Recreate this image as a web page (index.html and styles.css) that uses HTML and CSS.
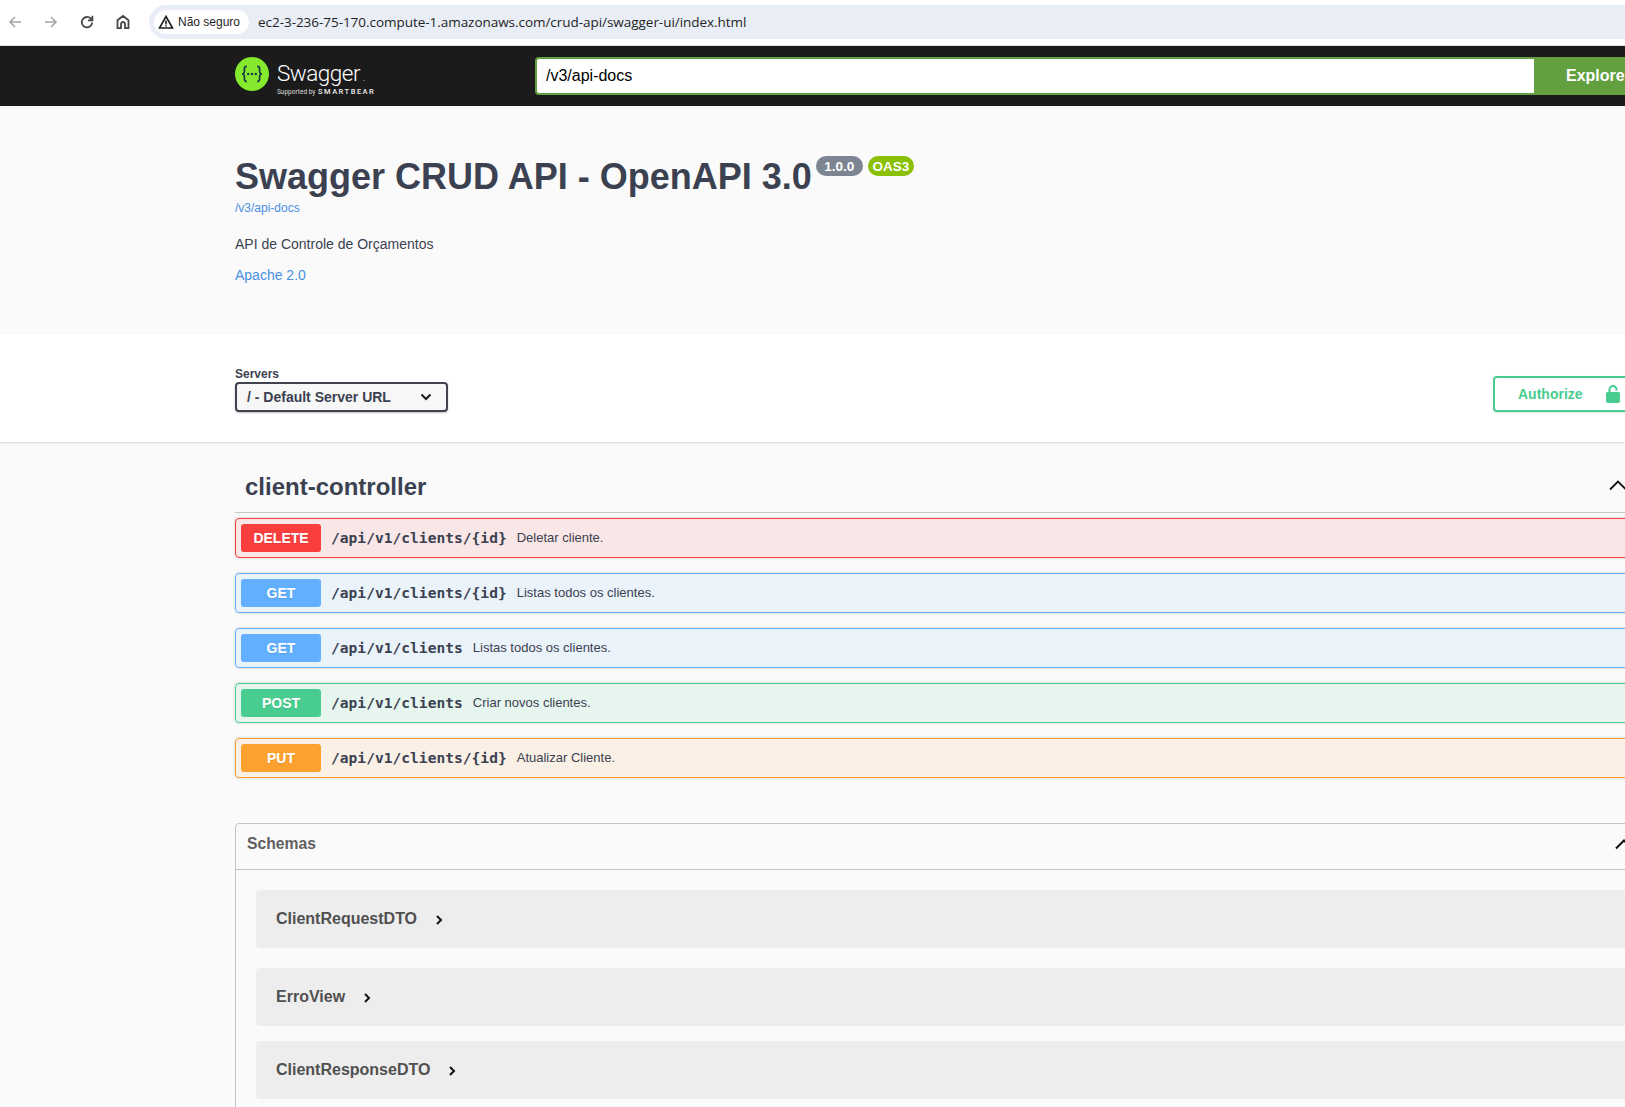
FILE: index.html
```html
<!DOCTYPE html>
<html lang="pt-BR">
<head>
<meta charset="utf-8">
<title>Swagger UI</title>
<link rel="stylesheet" href="styles.css">
</head>
<body>
<header class="browser">
  <div class="nav-icons">
    <svg class="nav-icon dim" viewBox="0 0 16 16"><path d="M14 8H3M8 3 3 8l5 5"/></svg>
    <svg class="nav-icon dim" viewBox="0 0 16 16"><path d="M2 8h11M8 3l5 5-5 5"/></svg>
    <svg class="nav-icon strong" viewBox="0 0 16 16"><path d="M13.200 8.500a5.200 5.200 0 1 1-1.500-4L13.400 6.300M13.400 1.800v4.500H9"/></svg>
    <svg class="nav-icon strong" viewBox="0 0 16 16"><path d="M2.500 14.200V6.300L8 2l5.500 4.300v7.900H10V10a2 2 0 0 0-4 0v4.200z"/></svg>
  </div>
  <div class="omnibox">
    <div class="security">
      <svg class="warn" viewBox="0 0 16 16"><path d="M8 2.500 1.500 14h13zM8 6.500v4M8 11.300v1.200"/></svg>
      <span>Não seguro</span>
    </div>
    <span class="url">ec2-3-236-75-170.compute-1.amazonaws.com/crud-api/swagger-ui/index.html</span>
  </div>
</header>

<div class="topbar">
  <div class="wrapper topbar-row">
    <div class="logo">
      <svg class="logo-mark" viewBox="0 0 36 36">
        <circle cx="18" cy="18" r="18" fill="#85ea2d"/>
        <path class="brace" d="M12.500 10c-3 0-2.500 2-2.500 4.500 0 2-.5 3.500-2.500 3.500 2 0 2.500 1.500 2.500 3.500s-.5 4.500 2.500 4.500M23.500 10c3 0 2.500 2 2.500 4.500 0 2 .5 3.500 2.500 3.500-2 0-2.500 1.500-2.500 3.500s.5 4.500-2.500 4.500"/>
        <circle class="dot" cx="14" cy="18" r="1.300"/><circle class="dot" cx="18" cy="18" r="1.300"/><circle class="dot" cx="22" cy="18" r="1.300"/>
      </svg>
      <div class="logo-text">
        <span class="logo-name">Swagger<span class="logo-tm">.</span></span>
        <span class="logo-sub">Supported by <b>SMARTBEAR</b></span>
      </div>
    </div>
    <form class="explore">
      <input class="explore-input" type="text" value="/v3/api-docs">
      <button class="explore-btn" type="button">Explore</button>
    </form>
  </div>
</div>

<section class="info">
  <div class="wrapper">
    <div class="title-row">
      <h1 class="title">Swagger CRUD API - OpenAPI 3.0</h1>
      <span class="pill pill-version">1.0.0</span>
      <span class="pill pill-oas">OAS3</span>
    </div>
    <a class="docs-link">/v3/api-docs</a>
    <p class="desc">API de Controle de Orçamentos</p>
    <a class="license">Apache 2.0</a>
  </div>
</section>

<section class="servers">
  <div class="wrapper servers-row">
    <div class="server-pick">
      <span class="servers-label">Servers</span>
      <div class="select">
        <span>/ - Default Server URL</span>
        <svg class="select-chev" viewBox="0 0 12 8"><path d="M1.500 1.500 6 6l4.500-4.500"/></svg>
      </div>
    </div>
    <button class="authorize" type="button">
      <span>Authorize</span>
      <svg class="lock" viewBox="0 0 14 18"><path class="lock-body" d="M0 8.500A1.500 1.500 0 0 1 1.500 7h11A1.500 1.500 0 0 1 14 8.500V16a2 2 0 0 1-2 2H2a2 2 0 0 1-2-2z"/><path class="lock-arc" d="M3.500 8V4.500a3.500 3.500 0 0 1 7 0v1.300"/></svg>
    </button>
  </div>
</section>

<main class="wrapper">
  <div class="tag">
    <h3 class="tag-name">client-controller</h3>
    <svg class="tag-chev" viewBox="0 0 20 12"><path d="M1 10.500 9 2.500l8 8"/></svg>
  </div>
  <div class="op op-delete"><span class="method">DELETE</span><span class="path">/api/v1/clients/{id}</span><span class="summary">Deletar cliente.</span></div>
  <div class="op op-get"><span class="method">GET</span><span class="path">/api/v1/clients/{id}</span><span class="summary">Listas todos os clientes.</span></div>
  <div class="op op-get"><span class="method">GET</span><span class="path">/api/v1/clients</span><span class="summary">Listas todos os clientes.</span></div>
  <div class="op op-post"><span class="method">POST</span><span class="path">/api/v1/clients</span><span class="summary">Criar novos clientes.</span></div>
  <div class="op op-put"><span class="method">PUT</span><span class="path">/api/v1/clients/{id}</span><span class="summary">Atualizar Cliente.</span></div>

  <section class="schemas">
    <div class="schemas-head">
      <h4 class="schemas-title">Schemas</h4>
      <svg class="schemas-chev" viewBox="0 0 20 12"><path d="M1 10.500 9 2.500l8 8"/></svg>
    </div>
    <div class="schemas-body">
      <div class="model model-first"><span>ClientRequestDTO</span><svg class="model-chev" viewBox="0 0 8 12"><path d="M2 2l4 4-4 4"/></svg></div>
      <div class="model model-second"><span>ErroView</span><svg class="model-chev" viewBox="0 0 8 12"><path d="M2 2l4 4-4 4"/></svg></div>
      <div class="model"><span>ClientResponseDTO</span><svg class="model-chev" viewBox="0 0 8 12"><path d="M2 2l4 4-4 4"/></svg></div>
    </div>
  </section>
</main>
</body>
</html>
```

FILE: styles.css
```css
* { box-sizing: border-box; }
html, body { height: 100%; }
body {
  margin: 0;
  height: 1107px;
  overflow: hidden;
  background: #fafafa;
  font-family: "Liberation Sans", Arial, sans-serif;
  color: #3b4151;
}
.wrapper { width: 1460px; margin-left: 235px; }

/* browser chrome */
.browser {
  height: 46px;
  background: #fff;
  border-bottom: 1px solid #dfe1e5;
  display: flex;
  align-items: center;
  padding-bottom: 1px;
}
.nav-icons { display: flex; width: 149px; padding-left: 7px; gap: 20px; }
.nav-icon { width: 16px; height: 16px; fill: none; stroke: #474747; stroke-width: 1.600; }
.nav-icon.dim { stroke: #a6a8ab; }
.nav-icon.strong { stroke-width: 1.800; }
.omnibox {
  flex: 1;
  height: 34px;
  background: #e9eef6;
  border-radius: 17px 0 0 17px;
  display: flex;
  align-items: center;
  padding-left: 5px;
}
.security {
  width: 95px;
  height: 24px;
  background: #fff;
  border-radius: 12px;
  display: flex;
  align-items: center;
  gap: 4px;
  padding-left: 4px;
  font-size: 12px;
  color: #1f1f1f;
}
.warn { width: 16px; height: 16px; fill: none; stroke: #1f1f1f; stroke-width: 1.600; }
.url { margin-left: 9px; font-size: 13.500px; color: #1f1f1f; white-space: nowrap; font-family: "Open Sans", "Liberation Sans", sans-serif; letter-spacing: -.04px; }

/* swagger topbar */
.topbar { height: 60px; background: #1b1b1b; }
.topbar-row { height: 60px; display: flex; align-items: center; }
.logo { width: 300px; display: flex; align-items: center; gap: 8px; color: #fff; }
.logo-mark { width: 34px; height: 34px; flex: none; margin-top: -5px; }
.brace { fill: none; stroke: #173647; stroke-width: 1.800; }
.dot { fill: #173647; }
.logo-text { display: flex; flex-direction: column; padding-top: 7px; }
.logo-name { font: 300 22.500px/20px Roboto, sans-serif; letter-spacing: -.5px; white-space: nowrap; }
.logo-tm { font-size: 9px; margin-left: 3px; }
.logo-sub { font: 400 6.500px/8px Roboto, sans-serif; color: #ddd; white-space: nowrap; }
.logo-sub b { font-size: 7.500px; letter-spacing: 1.500px; color: #eee; font-weight: 500; margin-left: 1px; }
.explore { flex: 1; display: flex; height: 38px; }
.explore-input {
  flex: 1;
  min-width: 0;
  border: 2px solid #62a03f;
  border-right: 0;
  border-radius: 4px 0 0 4px;
  background: #fff;
  padding: 0 9px;
  font: 16px "Liberation Sans", sans-serif;
  color: #000;
  outline: none;
}
.explore-btn {
  width: 161px;
  border: 0;
  background: #62a03f;
  color: #fff;
  font: bold 16px "Liberation Sans", sans-serif;
  border-radius: 0 4px 4px 0;
  padding: 0 0 0 32px;
  text-align: left;
}

/* info */
.info { height: 228px; padding-top: 50px; }
.title-row { display: flex; align-items: flex-start; height: 41px; }
.title { margin: 0; font-size: 36px; line-height: 41px; font-weight: 700; color: #3b4151; white-space: nowrap; }
.pill { height: 20px; border-radius: 10px; color: #fff; font-size: 13.500px; font-weight: 700; line-height: 21px; text-align: center; }
.pill-version { width: 47px; margin-left: 4px; background: #7d8492; }
.pill-oas { width: 46px; margin-left: 5px; background: #89bf04; }
.docs-link { display: block; margin-top: 3px; font-size: 12px; line-height: 16px; color: #4990e2; }
.desc { margin: 19px 0 0; font-size: 14px; line-height: 18px; color: #3b4151; }
.license { display: block; margin-top: 13px; font-size: 14px; line-height: 18px; color: #4990e2; }

/* servers */
.servers { height: 108px; background: #fff; box-shadow: 0 1px 2px rgba(0, 0, 0, .15); padding-top: 32px; }
.servers-row { display: flex; justify-content: space-between; align-items: flex-start; }
.server-pick { display: flex; flex-direction: column; }
.servers-label { font-size: 12px; font-weight: 700; line-height: 16px; }
.select {
  width: 213px;
  height: 30px;
  border: 2px solid #41444e;
  border-radius: 4px;
  background: #f7f7f7;
  box-shadow: 0 1px 2px rgba(0, 0, 0, .25);
  display: flex;
  align-items: center;
  justify-content: space-between;
  padding: 0 14px 0 10px;
  font-size: 14px;
  font-weight: 700;
}
.select-chev { width: 12px; height: 8px; fill: none; stroke: #1b1b1b; stroke-width: 2; }
.authorize {
  width: 140px;
  height: 36px;
  margin-top: 10px;
  margin-right: 62px;
  border: 2px solid #49cc90;
  border-radius: 4px;
  background: #fff;
  color: #49cc90;
  font: bold 14px "Liberation Sans", sans-serif;
  display: flex;
  align-items: center;
  padding: 0 0 0 23px;
  gap: 23px;
  box-shadow: 0 1px 2px rgba(0, 0, 0, .1);
}
.lock { width: 14px; height: 18px; flex: none; }
.lock-body { fill: #49cc90; }
.lock-arc { fill: none; stroke: #49cc90; stroke-width: 2; }

/* tag */
.tag {
  height: 51px;
  margin-top: 20px;
  border-bottom: 1px solid #c4c5c9;
  padding-left: 10px;
  display: flex;
  align-items: flex-start;
  position: relative;
}
.tag-name { margin: 0; font-size: 24px; font-weight: 700; line-height: 50px; white-space: nowrap; }
.tag-chev { position: absolute; left: 1374px; top: 17px; width: 20px; height: 12px; fill: none; stroke: #111; stroke-width: 1.800; }

/* operations */
.op {
  height: 40px;
  margin-top: 15px;
  border: 1px solid;
  border-radius: 4px;
  box-shadow: 0 0 3px rgba(0, 0, 0, .19);
  display: flex;
  align-items: center;
  padding-left: 5px;
}
.tag + .op { margin-top: 5px; }
.method {
  width: 80px;
  height: 28px;
  border-radius: 3px;
  color: #fff;
  font-size: 14px;
  font-weight: 700;
  line-height: 28px;
  text-align: center;
  text-shadow: 0 1px 0 rgba(0, 0, 0, .1);
}
.path {
  margin-left: 10px;
  padding-bottom: 1px;
  font: bold 14.600px "DejaVu Sans Mono", monospace;
  color: #3b4151;
  white-space: nowrap;
}
.summary { margin-left: 10px; padding-bottom: 2px; font-size: 13px; color: #3b4151; white-space: nowrap; }
.op-delete { background: rgba(249, 62, 62, .1); border-color: #f93e3e; }
.op-delete .method { background: #f93e3e; }
.op-get { background: rgba(97, 175, 254, .1); border-color: #61affe; }
.op-get .method { background: #61affe; }
.op-post { background: rgba(73, 204, 144, .1); border-color: #49cc90; }
.op-post .method { background: #49cc90; }
.op-put { background: rgba(252, 161, 48, .1); border-color: #fca130; }
.op-put .method { background: #fca130; }

/* schemas */
.schemas {
  margin-top: 45px;
  border: 1px solid #c2c3c8;
  border-radius: 4px;
  height: 400px;
}
.schemas-head {
  height: 46px;
  border-bottom: 1px solid #c2c3c8;
  padding: 0 0 5px 11px;
  display: flex;
  align-items: center;
  position: relative;
}
.schemas-title { margin: 0; font-size: 15.700px; font-weight: 700; color: #606060; }
.schemas-chev { position: absolute; left: 1379px; top: 14px; width: 20px; height: 12px; fill: none; stroke: #111; stroke-width: 2; }
.schemas-body { padding: 20px 20px 0; display: flex; flex-direction: column; }
.model {
  height: 58px;
  border-radius: 4px;
  background: #ededed;
  display: flex;
  align-items: center;
  padding-left: 20px;
  font-size: 16px;
  font-weight: 700;
  color: #505050;
  gap: 18px;
}
.model-first { margin-bottom: 20px; }
.model-second { margin-bottom: 15px; }
.model-chev { width: 8px; height: 12px; margin-top: 2px; fill: none; stroke: #111; stroke-width: 2; }
```
